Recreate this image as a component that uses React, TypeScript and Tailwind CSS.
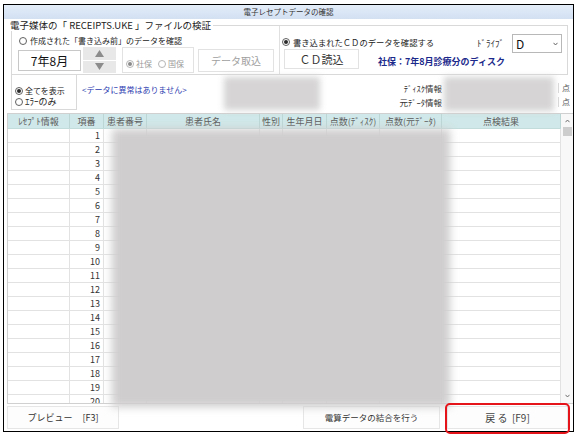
import React from 'react';

const FONT = "font-['Noto_Sans_CJK_JP','Noto_Sans',sans-serif]";

const Radio: React.FC<{ checked?: boolean; disabled?: boolean }> = ({ checked, disabled }) => (
  <span
    className={`inline-flex items-center justify-center w-[8px] h-[8px] rounded-full border bg-white shrink-0 ${
      disabled ? 'border-[#b5b5b5]' : 'border-[#606060]'
    }`}
  >
    {checked && <span className={`w-[4px] h-[4px] rounded-full ${disabled ? 'bg-[#8a8a8a]' : 'bg-[#2a2a2a]'}`} />}
  </span>
);

const columns = [
  { label: 'ﾚｾﾌﾟﾄ情報', w: 'w-[62px]' },
  { label: '項番', w: 'w-[34px]' },
  { label: '患者番号', w: 'w-[43px]' },
  { label: '患者氏名', w: 'w-[113px]' },
  { label: '性別', w: 'w-[23px]' },
  { label: '生年月日', w: 'w-[44px]' },
  { label: '点数(ﾃﾞｨｽｸ)', w: 'w-[53px]' },
  { label: '点数(元ﾃﾞｰﾀ)', w: 'w-[62px]' },
  { label: '点検結果', w: 'w-[119px]' },
];

const rows = Array.from({ length: 20 }, (_, i) => i + 1);

export default function App() {
  return (
    <div className={`relative w-[579px] h-[439px] bg-white pt-[4px] pl-[3px] overflow-hidden whitespace-nowrap ${FONT} text-[#222]`}>
      <div className="w-[571px] h-[428px] border border-black flex flex-col bg-white">
        {/* title bar */}
        <div className="h-[14px] shrink-0 bg-gradient-to-b from-[#e4edf9] to-[#d2e0f2] flex items-center justify-center">
          <span className="text-[7.5px] leading-none text-[#333]">電子レセプトデータの確認</span>
        </div>

        {/* group box */}
        <div className="relative shrink-0 mt-[6px] ml-[7px] w-[557px] h-[50px] border border-[#d9d9d9] flex">
          <span className="absolute -top-[6px] left-[-2px] bg-white pr-[2px] text-[9.5px] leading-[11px] text-[#222]">
            電子媒体の「 RECEIPTS.UKE 」ファイルの検証
          </span>

          {/* left half */}
          <div className="w-[268px] shrink-0 border-r border-[#e0e0e0] flex flex-col pt-[9px]">
            <div className="h-[12px] flex items-center pl-[7px] gap-[3px]">
              <Radio />
              <span className="text-[8px] leading-none">作成された「書き込み前」のデータを確認</span>
            </div>
            <div className="flex items-start pl-[6px]">
              <div className="mt-[3px] w-[63px] h-[21px] border border-[#c8c8c8] bg-white flex items-center justify-center">
                <span className="text-[12px] leading-none text-[#111]">7年8月</span>
              </div>
              <div className="ml-[2px] w-[33px] h-[26px] flex flex-col gap-[1px]">
                <div className="flex-1 bg-[#e8e8e8] flex items-center justify-center">
                  <svg width="9" height="7" viewBox="0 0 9 7">
                    <path d="M4.5 0 L9 7 L0 7 Z" fill="#8c8c8c" />
                  </svg>
                </div>
                <div className="flex-1 bg-[#e8e8e8] flex items-center justify-center">
                  <svg width="9" height="7" viewBox="0 0 9 7">
                    <path d="M0 0 L9 0 L4.5 7 Z" fill="#8c8c8c" />
                  </svg>
                </div>
              </div>
              <div className="ml-[6px] w-[72px] h-[26px] border border-[#e2e2e2] flex items-end pb-[4px] pl-[3px] gap-[2px]">
                <Radio checked disabled />
                <span className="text-[8px] leading-none text-[#9a9a9a]">社保</span>
                <span className="ml-[4px] flex">
                  <Radio disabled />
                </span>
                <span className="text-[8px] leading-none text-[#9a9a9a]">国保</span>
              </div>
              <div className="ml-[4px] mt-[2px] w-[76px] h-[23px] border border-[#e2e2e2] bg-white flex items-center justify-center">
                <span className="text-[10px] leading-none text-[#a0a0a0]">データ取込</span>
              </div>
            </div>
          </div>

          {/* right half */}
          <div className="flex-1 min-w-0 flex flex-col pt-[8px]">
            <div className="flex items-start">
              <div className="mt-[2px] h-[12px] flex items-center pl-[2px] gap-[3px]">
                <Radio checked />
                <span className="text-[8.3px] leading-none">書き込まれたＣＤのデータを確認する</span>
              </div>
              <span className="ml-auto mt-[5px] text-[9px] leading-none text-[#333]">ﾄﾞﾗｲﾌﾞ</span>
              <div className="ml-[8px] mr-[5px] w-[50px] h-[19px] border border-[#b8b8b8] bg-white flex items-center pl-[3px] pr-[3px]">
                <span className="text-[12px] leading-none text-[#111]">D</span>
                <svg className="ml-auto" width="5" height="4" viewBox="0 0 5 4">
                  <path d="M0.5 0.8 L2.5 3 L4.5 0.8" stroke="#555" strokeWidth="0.9" fill="none" />
                </svg>
              </div>
            </div>
            <div className="flex items-center -mt-[4px] pl-[4px]">
              <div className="w-[75px] h-[20px] border border-[#e2e2e2] bg-white flex items-center justify-center">
                <span className="text-[11px] leading-none text-[#333]">ＣＤ読込</span>
              </div>
              <span className="ml-[19px] mt-[5px] text-[9px] leading-none font-bold text-[#1c2a8c]">
                社保：7年8月診療分のディスク
              </span>
            </div>
          </div>
        </div>

        {/* second row */}
        <div className="h-[36px] shrink-0 flex">
          <div className="ml-[7px] w-[66px] h-[35px] border-x border-b border-[#d9d9d9] flex flex-col pt-[10px] pl-[3px]">
            <div className="h-[11px] flex items-center gap-[2px]">
              <Radio checked />
              <span className="text-[8px] leading-none">全てを表示</span>
            </div>
            <div className="h-[11px] flex items-center gap-[2px]">
              <Radio />
              <span className="text-[9px] leading-none">ｴﾗｰのみ</span>
            </div>
          </div>
          <div className="ml-[5px] pt-[11px] flex items-start">
            <span className="text-[8px] leading-none text-[#2b3bb0]">&lt;データに異常はありません&gt;</span>
          </div>
          <div className="ml-auto pr-[3px] pt-[6px] flex flex-col">
            {['ﾃﾞｨｽｸ情報', '元ﾃﾞｰﾀ情報'].map((l) => (
              <div key={l} className="h-[14px] flex items-center">
                <span className="w-[60px] text-right text-[8.5px] leading-none text-[#333]">{l}</span>
                <span className="w-[116px]" />
                <span className="h-[10px] border-l border-[#d8d8d8]" />
                <span className="pl-[3px] text-[8px] leading-none text-[#555]">点</span>
              </div>
            ))}
          </div>
        </div>

        {/* table */}
        <div className="mt-[2px] ml-[3px] w-[566px] h-[291px] shrink-0 border-l border-t border-b border-[#d0d0d0] flex overflow-hidden">
          <div className="flex flex-col">
            <div className="h-[15px] shrink-0 flex bg-[#d0e8e9] border-b border-[#c2dcdc]">
              {columns.map((c) => (
                <div
                  key={c.label}
                  className={`${c.w} h-full border-r border-[#bcd6d6] flex items-center justify-center text-[9px] leading-none text-[#5a5a5a]`}
                >
                  {c.label}
                </div>
              ))}
            </div>
            {rows.map((r) => (
              <div key={r} className="h-[14px] flex border-b border-[#e2e2e2] shrink-0">
                {columns.map((c, i) => (
                  <div
                    key={c.label}
                    className={`${c.w} h-full border-r border-[#e2e2e2] flex items-center justify-end pr-[3px] text-[9px] leading-none text-[#333]`}
                  >
                    {i === 1 ? r : ''}
                  </div>
                ))}
              </div>
            ))}
          </div>
          <div className="w-[12px] bg-[#f8f8f8] flex flex-col items-center">
            <svg className="mt-[5px]" width="5" height="4" viewBox="0 0 5 4">
              <path d="M0.5 3.2 L2.5 1 L4.5 3.2" stroke="#606060" strokeWidth="0.9" fill="none" />
            </svg>
            <div className="mt-[4px] w-[9px] h-[9px] bg-[#cdcdcd]" />
            <svg className="mt-auto mb-[5px]" width="5" height="4" viewBox="0 0 5 4">
              <path d="M0.5 0.8 L2.5 3 L4.5 0.8" stroke="#606060" strokeWidth="0.9" fill="none" />
            </svg>
          </div>
        </div>

        {/* buttons */}
        <div className="mt-[2px] h-[23px] shrink-0 flex">
          <div className="ml-[3px] w-[112px] h-full border border-[#e6e6e6] bg-[#fdfdfd] flex items-center justify-center gap-[10px]">
            <span className="text-[9px] leading-none text-[#333]">プレビュー</span>
            <span className="text-[9px] leading-none text-[#333]">[F3]</span>
          </div>
          <div className="ml-auto w-[137px] h-full border border-[#e6e6e6] bg-[#fdfdfd] flex items-center justify-center">
            <span className="text-[8.5px] leading-none text-[#333]">電算データの結合を行う</span>
          </div>
          <div className="ml-[7px] mr-[5px] w-[121px] h-full border border-[#e6e6e6] bg-[#fdfdfd] flex items-center justify-center">
            <span className="text-[10px] leading-none text-[#444]">戻 る&nbsp;&nbsp;[F9]</span>
          </div>
        </div>
      </div>

      {/* blurred overlays */}
      <div className="absolute left-[224px] top-[77px] w-[96px] h-[33px] bg-[#d6d4d4] blur-[3px]" />
      <div className="absolute left-[444px] top-[77px] w-[110px] h-[34px] bg-[#d6d4d4] blur-[3px]" />
      <div className="absolute left-[112px] top-[129px] w-[338px] h-[278px] bg-[#cfcdcd] blur-[4px]" />

      {/* highlight */}
      <div className="absolute left-[445px] top-[403px] w-[125px] h-[31px] border-2 border-[#e5141b] rounded-[5px]" />
    </div>
  );
}
